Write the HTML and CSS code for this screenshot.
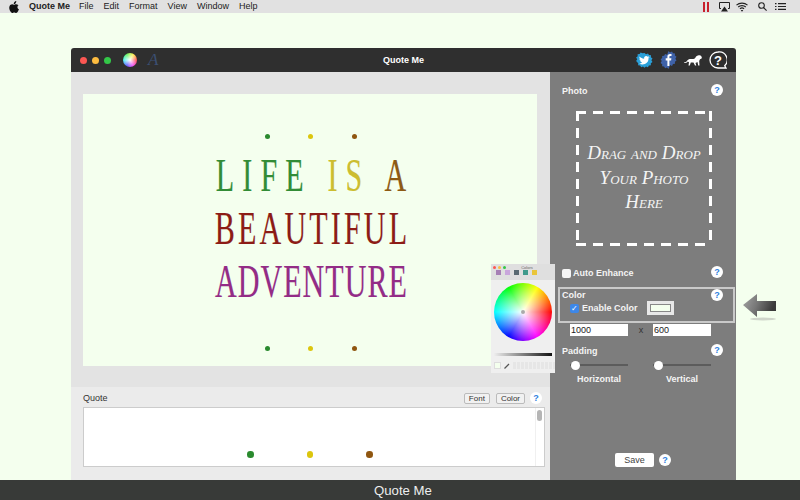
FILE: index.html
```html
<!DOCTYPE html>
<html lang="en">
<head>
  <meta charset="UTF-8">
  <title>Quote Me</title>
  <link rel="stylesheet" href="styles.css">
</head>
<body>

  <!-- Mac menu bar -->
  <div class="menubar">
    <svg class="apple" width="10" height="12" viewBox="0 0 20 24"><path fill="#111" d="M14.6 0c.2 1.9-.6 3.3-1.4 4.3-.9 1.1-2.300 1.900-3.700 1.800-.2-1.700.6-3.300 1.400-4.200C11.800.9 13.300.1 14.600 0zM19.300 8.200c-1.600 1-2.500 2.400-2.400 4.200.1 2 1.200 3.500 3 4.300-.5 1.500-1.200 3-2.100 4.300-1 1.400-2 2.800-3.500 2.800s-2-.9-3.800-.9-2.400.9-3.800.9c-1.500.1-2.700-1.500-3.700-2.900C.9 17.900-.6 12.800 1.500 9.300c1-1.700 2.800-2.800 4.700-2.900 1.500 0 2.800 1 3.700 1 .9 0 2.500-1.200 4.200-1.100 1.700.1 3.200.6 4.200 1.900z"/></svg>
    <b>Quote Me</b>
    <span>File</span>
    <span>Edit</span>
    <span>Format</span>
    <span>View</span>
    <span>Window</span>
    <span>Help</span>
    <div class="status">
      <svg class="st-pause" width="6" height="10" viewBox="0 0 6 10"><path fill="#c8202c" d="M0 0h2v10H0zM4 0h2v10H4z"/></svg>
      <svg width="11" height="10" viewBox="0 0 11 10"><path fill="none" stroke="#222" d="M2 6.500H.5v-6h10v6H9"/><path fill="#222" d="M5.500 4.500 9 9.500H2z"/></svg>
      <svg class="st-wifi" width="12" height="10" viewBox="0 0 12 10" fill="none" stroke="#222" stroke-width="1.100"><path d="M.5 3.200c3-2.800 8-2.800 11 0M2.200 5c2-1.900 5.600-1.900 7.600 0M3.900 6.800c1.100-1 3.100-1 4.200 0"/><path fill="#222" stroke="none" d="M6 9.800 4.800 8.300c.7-.5 1.700-.5 2.400 0z"/></svg>
      <svg class="st-search" width="9" height="9" viewBox="0 0 9 9" fill="none" stroke="#222" stroke-width="1.100"><circle cx="3.500" cy="3.500" r="2.800"/><path d="m5.600 5.600 3 3"/></svg>
      <svg width="11" height="7" viewBox="0 0 11 7" fill="none" stroke="#222" stroke-width="1.200"><path d="M0 .6h1.500M3 .6h8M0 3.500h1.500M3 3.500h8M0 6.400h1.500M3 6.400h8"/></svg>
    </div>
  </div>

  <div class="desktop">
    <div class="window">

      <div class="titlebar">
        <div class="lights">
          <i class="red"></i>
          <i class="yellow"></i>
          <i class="green"></i>
        </div>
        <div class="wheel-btn"></div>
        <span class="font-btn">A</span>
        <span class="title">Quote Me</span>
        <div class="social">
          <!-- twitter -->
          <svg width="17" height="17" viewBox="0 0 17 17"><path fill="#2a9fd8" d="M8.500 1l1.500 1.300 2-.9 1 1.600 2 .2-.1 2 1.600 1.300-1.100 1.800 1.100 1.800-1.700 1.200.1 2-2 .3-1 1.700-1.900-.8-1.500 1.300-1.500-1.300-1.900.8-1-1.700-2-.3.100-2L.1 9.100l1.100-1.800L.1 5.500l1.600-1.300-.1-2 2-.2 1-1.600 2 .9z"/><path fill="#fff" d="M13.300 5.200c-.4.2-.8.300-1.200.3.400-.3.800-.700.900-1.200-.4.200-.9.400-1.300.5a2.100 2.100 0 0 0-3.600 1.900C6.300 6.600 4.800 5.800 3.700 4.500c-.6 1-.3 2.200.6 2.800-.3 0-.7-.1-.9-.3 0 1 .7 1.900 1.700 2.100-.3.100-.6.100-.9 0 .3.900 1.100 1.400 2 1.500-.9.700-2 1-3.100.9 3.900 2.400 9.600.3 9.400-5.200.5-.3.900-.7 1.200-1.100z"/></svg>
          <!-- facebook -->
          <svg width="17" height="18" viewBox="0 0 17 18"><path fill="#3f62a8" d="M8.500 0l1.500 1.400 2-.8 1 1.700 2 .2-.1 2 1.600 1.300-1.100 1.900 1.100 1.800-1.600 1.300.1 2-2 .3-1 1.800-1.900-.8L8.500 18 7 16.500l-1.900.8-1-1.800-2-.3.1-2L.6 11.900l1.100-1.800L.6 8.200l1.600-1.300-.1-2 2-.2 1-1.700 2 .8z"/><path fill="#fff" d="M9.400 15V9.400h1.700l.3-2.100h-2V6c0-.6.2-1 1-1h1.100V3.100c-.5-.1-1-.1-1.500-.1-1.600 0-2.600 1-2.600 2.700v1.600H5.700v2.100h1.700V15z"/></svg>
          <!-- lion -->
          <svg width="18" height="12" viewBox="0 0 18 12"><path fill="#fff" d="M0 8.500c1.500 0 2.500-1 3.500-2.300C4.600 5 6 4.800 8 5c1.500.1 2.800-.3 3.500-1.500C12.200 2 13.800 1 15.500 1.300c1.500.3 2.500 1.300 2.300 2.500-.1 1-1 1.400-1.800 1.500l-.8 1.700.3 4.500h-1.300l-.7-3.500-2 .9.800 2.600h-1.300L9.500 8.600 6.800 8.500l-1 3H4.500L5 8.200 3.800 7.400C3 8.500 1.500 9.100 0 9z"/></svg>
          <!-- help bubble -->
          <svg class="bubble" width="18" height="19" viewBox="0 0 18 19"><path fill="none" stroke="#fff" stroke-width="1.300" d="M9 1a8 8 0 1 0 0 16h8l-1.300-2.300A8 8 0 0 0 9 1z"/><text x="9" y="13.500" text-anchor="middle" class="bubble-q">?</text></svg>
        </div>
      </div>

      <div class="content">
        <div class="left">
          <div class="preview">
            <div class="canvas">
              <div class="dots small">
                <i class="c-green"></i><i class="c-yellow"></i><i class="c-brown"></i>
              </div>
              <div class="quote-text">
                <p class="line-1"><span class="t-green">LIFE</span> <span class="t-yellow">IS</span> <span class="t-brown">A</span></p>
                <p class="line-2">BEAUTIFUL</p>
                <p class="line-3">ADVENTURE</p>
              </div>
              <div class="dots small">
                <i class="c-green"></i><i class="c-yellow"></i><i class="c-brown"></i>
              </div>
            </div>
          </div>

          <!-- Quote Section -->
          <div class="quote-form">
            <div class="quote-head">
              <label>Quote</label>
              <button>Font</button>
              <button>Color</button>
              <span class="help">?</span>
            </div>
            <div class="quote-box">
              <div class="dots big">
                <i class="c-green"></i><i class="c-yellow"></i><i class="c-brown"></i>
              </div>
              <div class="scrollbar"><i></i></div>
            </div>
          </div>
        </div>

        <!-- Settings -->
        <div class="panel">
          <div class="panel-row">
            <b>Photo</b>
            <span class="help">?</span>
          </div>
          <div class="dropzone">
            <p>Drag and Drop</p>
            <p>Your Photo</p>
            <p>Here</p>
          </div>
          <div class="panel-row auto-row">
            <b class="check-label"><i class="check"></i>Auto Enhance</b>
            <span class="help">?</span>
          </div>
          <div class="color-box">
            <div class="panel-row">
              <b>Color</b>
              <span class="help">?</span>
            </div>
            <div class="enable-row">
              <i class="check on">&#10003;</i>
              <b>Enable Color</b>
              <span class="swatch"><i></i></span>
            </div>
          </div>
          <div class="two-col size-row">
            <span class="field">1000</span>
            <span class="times">x</span>
            <span class="field">600</span>
          </div>
          <div class="panel-row padding-row">
            <b>Padding</b>
            <span class="help">?</span>
          </div>
          <div class="two-col sliders">
            <div class="slider"><i></i></div>
            <div class="slider"><i></i></div>
          </div>
          <div class="two-col slider-labels">
            <b>Horizontal</b>
            <b>Vertical</b>
          </div>
          <div class="save-row">
            <button>Save</button>
            <span class="help">?</span>
          </div>
        </div>
      </div>
    </div>

    <!-- floating Colors window -->
    <div class="colors">
      <div class="colors-top">
        <div class="mini-lights"><i class="red"></i><i class="yellow"></i><i class="green"></i></div>
        <span>Colors</span>
      </div>
      <div class="colors-tools">
        <i class="tool-a"></i><i class="tool-b"></i><i class="tool-c"></i><i class="tool-d"></i><i class="tool-e"></i>
      </div>
      <div class="colors-wheel"><i></i></div>
      <div class="colors-slider"></div>
      <div class="colors-foot">
        <i class="well"></i>
        <svg width="6" height="6" viewBox="0 0 6 6"><path stroke="#555" stroke-width="1.200" d="M.5 5.500 5 1"/></svg>
        <div class="cells"></div>
      </div>
    </div>

    <!-- arrow pointing at the colour box -->
    <svg class="arrow" width="34" height="28" viewBox="0 0 34 28">
      <defs>
        <linearGradient id="arrowFill" x1="0" y1="0" x2="1" y2="0.300">
          <stop offset="0" stop-color="#a5a5a5"/>
          <stop offset="0.5" stop-color="#777"/>
          <stop offset="1" stop-color="#3a3a3a"/>
        </linearGradient>
      </defs>
      <ellipse cx="20" cy="25" rx="13" ry="1.500" fill="#cfd5ca"/>
      <path fill="url(#arrowFill)" d="M0 11 14 0v7h19v10H14v6z"/>
    </svg>
  </div>

  <div class="caption">Quote Me</div>

</body>
</html>
```

FILE: styles.css
```css
* {
  box-sizing: border-box;
}
body {
  font-family: "Liberation Sans", Arial, sans-serif;
  background-color: #f4ffee;
  width: 800px;
  height: 500px;
  margin: 0;
  overflow: hidden;
  display: flex;
  flex-direction: column;
}
p {
  margin: 0;
}
i {
  display: block;
}
button {
  font-family: inherit;
  padding: 0;
}

/* menu bar */
.menubar {
  height: 13px;
  background-color: #e1e1e1;
  color: #222;
  font-size: 9px;
  line-height: 13px;
  display: flex;
  align-items: center;
  padding-left: 9px;
  flex: none;
}
.menubar .apple {
  margin-right: 10px;
}
.menubar b {
  margin-right: 9px;
}
.menubar span {
  margin-right: 10px;
}
.status {
  margin-left: auto;
  display: flex;
  align-items: center;
  gap: 8px;
  padding-right: 14px;
}
.st-pause {
  margin-right: 2px;
}
.st-wifi {
  margin-left: -2px;
}
.st-search {
  margin-left: 2px;
}

.desktop {
  flex: 1;
  padding: 35px 0 0 71px;
  position: relative;
}

/* main window */
.window {
  width: 665px;
  height: 432px;
  display: flex;
  flex-direction: column;
  border-radius: 3px 3px 0 0;
  overflow: hidden;
}
.titlebar {
  height: 24px;
  background-color: #2f2f2f;
  position: relative;
  display: flex;
  align-items: center;
  padding-left: 9px;
  flex: none;
}
.lights {
  display: flex;
  gap: 5px;
}
.lights i {
  width: 7px;
  height: 7px;
  border-radius: 50%;
}
.red {
  background-color: #fc5753;
}
.yellow {
  background-color: #fdbc40;
}
.green {
  background-color: #33c748;
}
.wheel-btn {
  width: 14px;
  height: 14px;
  margin-left: 12px;
  border-radius: 50%;
  background: radial-gradient(circle, #fff 0, rgba(255, 255, 255, 0) 80%),
    conic-gradient(from 90deg, #f33, #e3e, #44f, #3ee, #4e4, #fe3, #f33);
}
.font-btn {
  font-family: "Liberation Serif", serif;
  font-style: italic;
  font-size: 17px;
  color: #3c4f73;
  margin-left: 11px;
}
.title {
  position: absolute;
  left: 312px;
  font-size: 9px;
  font-weight: bold;
  color: #fff;
}
.social {
  margin-left: auto;
  display: flex;
  align-items: center;
  gap: 7px;
  padding-right: 9px;
}
.bubble-q {
  font-family: "Liberation Sans", sans-serif;
  font-size: 13px;
  font-weight: bold;
  fill: #fff;
}

.content {
  flex: 1;
  display: flex;
  min-height: 0;
}

/* left column */
.left {
  width: 479px;
  display: flex;
  flex-direction: column;
  background-color: #e3e3e3;
}
.preview {
  height: 315px;
  padding: 22px 13px 0 12px;
}
.canvas {
  height: 272px;
  background-color: #f4ffee;
  padding-top: 39.500px;
}
.dots {
  display: flex;
  justify-content: center;
}
.dots.small {
  gap: 38.500px;
  padding-left: 1px;
}
.dots.small i {
  width: 5px;
  height: 5px;
  border-radius: 50%;
}
.dots.big {
  gap: 53px;
}
.dots.big i {
  width: 6.500px;
  height: 6.500px;
  border-radius: 50%;
}
.c-green {
  background-color: #2a8a2e;
}
.c-yellow {
  background-color: #dcc60e;
}
.c-brown {
  background-color: #8f5610;
}

.quote-text {
  font-family: "Liberation Serif", serif;
  font-size: 47px;
  line-height: 53px;
  text-align: center;
  height: 207px;
  padding-top: 10.500px;
  white-space: nowrap;
  -webkit-text-stroke: 0.200px;
}
.quote-text p {
  transform: scaleX(0.64);
  transform-origin: 227px 0;
}
.line-1 {
  letter-spacing: 12.700px;
  text-indent: 15.700px;
}
.line-2 {
  letter-spacing: 4.900px;
  text-indent: 7.900px;
  color: #8c1c16;
}
.line-3 {
  letter-spacing: 1.600px;
  text-indent: 4.600px;
  color: #932c86;
}
.t-green {
  color: #328c36;
}
.t-yellow {
  color: #ccbd30;
}
.t-brown {
  color: #8d5a14;
}

.quote-form {
  flex: 1;
  background-color: #ebebeb;
  padding: 2px 5px 0 12px;
}
.quote-head {
  height: 18px;
  display: flex;
  align-items: center;
  font-size: 9px;
  color: #333;
}
.quote-head label {
  margin-right: auto;
}
.quote-head button {
  height: 11px;
  font-size: 8px;
  line-height: 9px;
  color: #333;
  background-color: #f1f1f1;
  border: 1px solid #bbb;
  border-radius: 2px;
  padding: 0 4px;
  margin-right: 6px;
}
.quote-head .help {
  margin: 0 3px 0 -1px;
}
.quote-box {
  height: 60px;
  background-color: #fff;
  border: 1px solid #ccc;
  padding-top: 43px;
  padding-right: 8px;
  position: relative;
}
.scrollbar {
  position: absolute;
  top: 0;
  right: 0;
  width: 9px;
  height: 58px;
  border-left: 1px solid #f0f0f0;
  padding: 2px 1px 0 1px;
}
.scrollbar i {
  width: 5px;
  height: 11px;
  border-radius: 3px;
  background-color: #b5b5b5;
}

/* right panel */
.panel {
  width: 186px;
  background-color: #7d7d7d;
  color: #f4f4f4;
  font-size: 9px;
  padding: 11px 13px 13px 12px;
  display: flex;
  flex-direction: column;
}
.panel-row {
  height: 14px;
  display: flex;
  align-items: center;
  justify-content: space-between;
}
.panel-row b {
  padding-top: 2px;
}
.color-box .panel-row b {
  padding-top: 0;
}
.help {
  width: 12px;
  height: 12px;
  border-radius: 50%;
  background-color: #fff;
  color: #2f7fe0;
  font-size: 9px;
  font-weight: bold;
  line-height: 12px;
  text-align: center;
  flex: none;
}
.dropzone {
  width: 136px;
  height: 135px;
  margin: 14px 0 0 14px;
  background:
    repeating-linear-gradient(to right, #fff 0 10px, transparent 10px 17px) top / 100% 3px no-repeat,
    repeating-linear-gradient(to right, #fff 0 10px, transparent 10px 17px) bottom / 100% 3px no-repeat,
    repeating-linear-gradient(to bottom, #fff 0 10px, transparent 10px 17px) left / 3px 100% no-repeat,
    repeating-linear-gradient(to bottom, #fff 0 10px, transparent 10px 17px) right / 3px 100% no-repeat;
  font-family: "Liberation Serif", serif;
  font-style: italic;
  font-variant: small-caps;
  font-size: 19px;
  line-height: 24.500px;
  color: #f4f4f4;
  text-align: center;
  padding-top: 30px;
}
.auto-row {
  margin-top: 19px;
}
.check-label {
  display: flex;
  align-items: center;
  gap: 2px;
}
.check {
  width: 9px;
  height: 9px;
  background-color: #f6f6f6;
  border-radius: 2px;
}
.check.on {
  background-color: #3d87e8;
  color: #fff;
  font-size: 8px;
  font-style: normal;
  line-height: 9px;
  text-align: center;
}
.color-box {
  width: 177px;
  height: 36px;
  margin: 8px 0 0 -4px;
  border: 2px solid #c9c9c9;
  padding: 0 10px 0 2px;
}
.color-box .panel-row {
  height: 12px;
}
.enable-row {
  display: flex;
  align-items: center;
  height: 14px;
  padding-left: 8px;
}
.enable-row b {
  margin-left: 3px;
}
.swatch {
  width: 27px;
  height: 14px;
  margin-left: 9px;
  background-color: #e8e8e8;
  padding: 3px;
}
.swatch i {
  height: 100%;
  background-color: #f4ffee;
  border: 1px solid #888;
}
.two-col {
  display: grid;
  grid-template-columns: 58px 25px 58px;
  padding-left: 8px;
}
.size-row {
  margin-top: 1px;
  height: 12px;
  color: #222;
  font-size: 9px;
  line-height: 12px;
}
.field {
  background-color: #fff;
  padding-left: 1px;
}
.times {
  text-align: center;
  color: #333;
  padding-left: 1px;
}
.padding-row {
  margin-top: 7px;
}
.sliders {
  grid-template-columns: 58px 58px;
  column-gap: 25px;
  margin-top: 2px;
}
.slider {
  height: 12px;
  background: linear-gradient(#5c5c5c, #5c5c5c) center / 100% 2px no-repeat;
  display: flex;
  align-items: center;
}
.slider i {
  width: 9px;
  height: 9px;
  margin-left: 1px;
  border-radius: 50%;
  background-color: #fff;
}
.slider-labels {
  grid-template-columns: 58px 58px;
  column-gap: 25px;
  margin-top: 2px;
  text-align: center;
  white-space: nowrap;
  line-height: 13px;
}
.save-row {
  margin-top: auto;
  padding-left: 53px;
  display: flex;
  align-items: center;
  gap: 5px;
}
.save-row button {
  width: 39px;
  height: 14px;
  background-color: #fff;
  border: none;
  border-radius: 2px;
  color: #444;
  font-size: 9px;
}

/* Colors panel */
.colors {
  position: absolute;
  left: 491px;
  top: 251px;
  width: 64px;
  height: 109px;
  background-color: #efefef;
}
.colors-top {
  height: 16px;
  background-color: #dfdfdf;
  position: relative;
  font-size: 4px;
  color: #666;
  text-align: center;
  line-height: 8px;
  padding-left: 8px;
}
.mini-lights {
  position: absolute;
  left: 2px;
  top: 2px;
  display: flex;
  gap: 2px;
}
.mini-lights i {
  width: 3px;
  height: 3px;
  border-radius: 50%;
}
.colors-tools {
  position: absolute;
  left: 5px;
  top: 6px;
  display: flex;
  gap: 4px;
}
.colors-tools i {
  width: 5px;
  height: 5px;
}
.tool-a {
  background-color: #a67fb5;
}
.tool-b {
  background-color: #c9a6dc;
}
.tool-c {
  background-color: #5a6a72;
}
.tool-d {
  background-color: #3f9a8c;
}
.tool-e {
  background-color: #e9c53a;
}
.colors-wheel {
  width: 58px;
  height: 58px;
  margin: 3px 0 0 3px;
  border-radius: 50%;
  background: radial-gradient(circle closest-side, #fff 0, rgba(255, 255, 255, 0) 100%),
    conic-gradient(from 90deg, #f00, #f0f, #00f, #0ff, #0f0, #ff0, #f00);
  display: flex;
  align-items: center;
  justify-content: center;
}
.colors-wheel i {
  width: 4px;
  height: 4px;
  border-radius: 50%;
  background-color: #aaa;
}
.colors-slider {
  height: 3px;
  margin: 12px 3px 0 3px;
  background: linear-gradient(to right, #eee, #111);
}
.colors-foot {
  display: flex;
  align-items: center;
  gap: 3px;
  margin: 6px 0 0 3px;
}
.well {
  width: 7px;
  height: 7px;
  background-color: #f4ffee;
  border: 1px solid #ddd;
}
.cells {
  width: 42px;
  height: 7px;
  background: repeating-linear-gradient(to right, #e6e6e6 0 3px, #efefef 3px 4px);
}

.arrow {
  position: absolute;
  left: 743px;
  top: 281px;
}

.caption {
  height: 20px;
  background-color: #383a38;
  color: #eee;
  font-size: 13.200px;
  line-height: 21px;
  text-align: center;
  padding-left: 6px;
  flex: none;
}
```
